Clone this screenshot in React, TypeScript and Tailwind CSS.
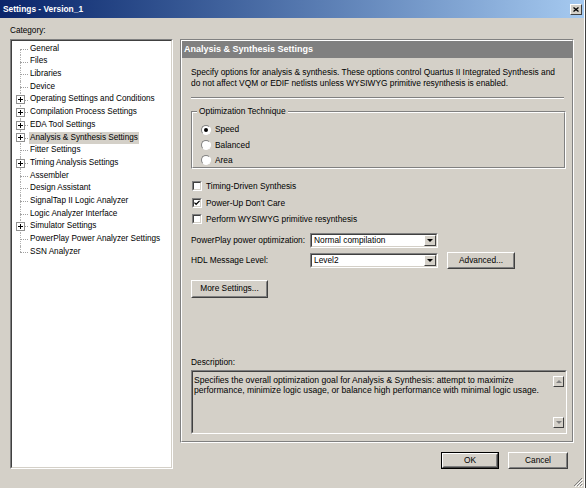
import React from 'react';

const tree: { label: string; plus?: boolean }[] = [
  { label: 'General' },
  { label: 'Files' },
  { label: 'Libraries' },
  { label: 'Device' },
  { label: 'Operating Settings and Conditions', plus: true },
  { label: 'Compilation Process Settings', plus: true },
  { label: 'EDA Tool Settings', plus: true },
  { label: 'Analysis & Synthesis Settings', plus: true },
  { label: 'Fitter Settings' },
  { label: 'Timing Analysis Settings', plus: true },
  { label: 'Assembler' },
  { label: 'Design Assistant' },
  { label: 'SignalTap II Logic Analyzer' },
  { label: 'Logic Analyzer Interface' },
  { label: 'Simulator Settings', plus: true },
  { label: 'PowerPlay Power Analyzer Settings' },
  { label: 'SSN Analyzer' },
];

const SELECTED = 'Analysis & Synthesis Settings';

function Button({ label, width, isDefault }: { label: string; width: string; isDefault?: boolean }) {
  return (
    <div className={`${width} h-full ${isDefault ? 'border border-black' : ''}`}>
      <div className="h-full border border-white border-r-[#404040] border-b-[#404040]">
        <div className="h-full flex items-center justify-center border border-transparent border-r-[#808080] border-b-[#808080]">
          {label}
        </div>
      </div>
    </div>
  );
}

function Combo({ value }: { value: string }) {
  return (
    <div className="w-[128px] h-[15px] border border-[#808080] border-r-white border-b-white">
      <div className="h-full flex bg-white border border-[#404040] border-r-[#d4d0c8] border-b-[#d4d0c8]">
        <div className="flex-1 flex items-center pl-[2px]">{value}</div>
        <div className="w-[12px] h-full bg-[#d4d0c8] border border-white border-r-[#404040] border-b-[#404040] flex items-center justify-center">
          <div className="w-0 h-0 border-l-[3px] border-r-[3px] border-t-[3px] border-l-transparent border-r-transparent border-t-black" />
        </div>
      </div>
    </div>
  );
}

function Checkbox({ label, checked }: { label: string; checked?: boolean }) {
  return (
    <div className="h-[16.5px] flex items-center">
      <div className="ml-[1px] w-[10px] h-[10px] border border-[#808080] border-r-white border-b-white">
        <div className="w-full h-full bg-white border border-[#404040] border-r-[#d4d0c8] border-b-[#d4d0c8] flex items-center justify-center">
          {checked && (
            <svg width="7" height="6" viewBox="0 0 7 6">
              <path d="M0.5 2.5 L2.5 4.5 L6.5 0.5" stroke="black" strokeWidth="1.4" fill="none" />
            </svg>
          )}
        </div>
      </div>
      <span className="ml-[4px]">{label}</span>
    </div>
  );
}

function Radio({ label, checked }: { label: string; checked?: boolean }) {
  return (
    <div className="h-[15.3px] flex items-center">
      <div className="w-[10px] h-[10px] rounded-full border border-[#808080] border-r-white border-b-white bg-white flex items-center justify-center">
        {checked && <div className="w-[4px] h-[4px] rounded-full bg-black" />}
      </div>
      <span className="ml-[4px]">{label}</span>
    </div>
  );
}

export default function App() {
  return (
    <div
      className="w-[586px] h-[488px] bg-[#d4d0c8] text-black text-[8.2px] leading-none overflow-hidden flex"
      style={{ fontFamily: '"Liberation Sans", Arial, sans-serif' }}
    >
      <div className="w-[584px] h-full flex flex-col relative">
        {/* title bar */}
        <div className="h-[18px] flex items-center justify-between pl-[3px] pr-[2px] bg-gradient-to-r from-[#0a246a] to-[#a6caf0]">
          <span className="text-white font-bold text-[8.4px]">Settings - Version_1</span>
          <div className="w-[12px] h-[11px] bg-[#d4d0c8] border border-white border-r-[#404040] border-b-[#404040] flex items-center justify-center">
            <svg width="6" height="5" viewBox="0 0 6 5">
              <path d="M0.5 0.5 L5.5 4.5 M5.5 0.5 L0.5 4.5" stroke="black" strokeWidth="1.3" />
            </svg>
          </div>
        </div>

        <div className="flex-1 flex pl-[10px]">
          {/* category column */}
          <div className="w-[163px] flex flex-col">
            <div className="h-[21px] pt-[9px]">Category:</div>
            <div className="h-[430px] border border-[#808080] border-r-white border-b-white">
              <div className="h-full bg-white border border-[#404040] border-r-[#d4d0c8] border-b-[#d4d0c8] pt-[1.5px] pl-[4px]">
                {tree.map((item, i) => (
                  <div key={item.label} className="h-[12.7px] flex items-center">
                    <div className="w-[12px] h-full relative">
                      <div
                        className={`absolute left-[4px] border-l border-dotted border-[#b0b0b0] ${
                          i === 0 ? 'top-1/2 bottom-0' : i === tree.length - 1 ? 'top-0 bottom-1/2' : 'top-0 bottom-0'
                        }`}
                      />
                      <div className="absolute left-[4px] right-0 top-1/2 border-t border-dotted border-[#a0a0a0]" />
                      {item.plus && (
                        <div className="absolute left-[0px] top-[2px] w-[9px] h-[9px] bg-white border border-[#909090] flex items-center justify-center">
                          <svg width="5" height="5" viewBox="0 0 5 5">
                            <path d="M0 2.5 H5 M2.5 0 V5" stroke="black" strokeWidth="1" />
                          </svg>
                        </div>
                      )}
                    </div>
                    <span
                      className={`ml-[1px] px-[1px] h-[12px] flex items-center ${
                        item.label === SELECTED ? 'bg-[#d4d0c8]' : ''
                      }`}
                    >
                      {item.label}
                    </span>
                  </div>
                ))}
              </div>
            </div>
          </div>

          {/* settings column */}
          <div className="ml-[7px] w-[394px] flex flex-col text-[8.35px]">
            <div className="mt-[21px] h-[404px] border border-[#808080] border-r-white border-b-white">
              <div className="h-full border border-white border-r-[#808080] border-b-[#808080] flex flex-col">
                <div className="h-[17px] bg-[#808080] text-white font-bold text-[9px] flex items-center pl-[2px]">
                  Analysis &amp; Synthesis Settings
                </div>
                <div className="pl-[9px] pr-[6px] flex flex-col">
                  <p className="mt-[9px] leading-[11px]">
                    Specify options for analysis &amp; synthesis. These options control Quartus II Integrated Synthesis and
                    <br />
                    do not affect VQM or EDIF netlists unless WYSIWYG primitive resynthesis is enabled.
                  </p>
                  <div className="mt-[8px] w-[373px] h-[2px] border-t border-[#808080] border-b border-b-white" />

                  {/* optimization group */}
                  <div className="mt-[12px] w-[375px] h-[58px] border border-[#808080] border-r-white border-b-white relative">
                    <div className="h-full border border-white border-r-[#808080] border-b-[#808080] pl-[8px] pt-[9px]">
                      <span className="absolute -top-[5px] left-[5px] px-[2px] bg-[#d4d0c8]">Optimization Technique</span>
                      <Radio label="Speed" checked />
                      <Radio label="Balanced" />
                      <Radio label="Area" />
                    </div>
                  </div>

                  <div className="mt-[9px]">
                    <Checkbox label="Timing-Driven Synthesis" />
                    <Checkbox label="Power-Up Don't Care" checked />
                    <Checkbox label="Perform WYSIWYG primitive resynthesis" />
                  </div>

                  <div className="mt-[5px] h-[15px] flex items-center">
                    <span className="w-[119px]">PowerPlay power optimization:</span>
                    <Combo value="Normal compilation" />
                  </div>
                  <div className="mt-[4px] h-[17px] flex items-center">
                    <span className="w-[119px]">HDL Message Level:</span>
                    <Combo value="Level2" />
                    <div className="ml-[9px] h-[17px]">
                      <Button label="Advanced..." width="w-[68px]" />
                    </div>
                  </div>
                  <div className="mt-[11px] h-[18px]">
                    <Button label="More Settings..." width="w-[77px]" />
                  </div>

                  <div className="mt-[59px] h-[12px] flex items-center">Description:</div>
                  <div className="mt-[1px] w-[376px] h-[64px] border border-[#808080] border-r-white border-b-white">
                    <div className="h-full flex border border-[#404040] border-r-[#d4d0c8] border-b-[#d4d0c8]">
                      <p className="flex-1 pl-[1px] pt-[3px] leading-[10.5px] text-[8.6px]">
                        Specifies the overall optimization goal for Analysis &amp; Synthesis: attempt to maximize
                        <br />
                        performance, minimize logic usage, or balance high performance with minimal logic usage.
                      </p>
                      <div className="w-[12px] flex flex-col justify-between py-[4px] pr-[1px]">
                        <div className="h-[11px] border border-white border-r-[#404040] border-b-[#404040] flex items-center justify-center">
                          <div className="w-0 h-0 border-l-[3px] border-r-[3px] border-b-[3px] border-l-transparent border-r-transparent border-b-[#808080]" />
                        </div>
                        <div className="h-[11px] border border-white border-r-[#404040] border-b-[#404040] flex items-center justify-center">
                          <div className="w-0 h-0 border-l-[3px] border-r-[3px] border-t-[3px] border-l-transparent border-r-transparent border-t-[#808080]" />
                        </div>
                      </div>
                    </div>
                  </div>
                </div>
              </div>
            </div>

            <div className="mt-[9px] h-[17px] flex justify-end pr-[6px] gap-[9px]">
              <Button label="OK" width="w-[58px]" isDefault />
              <Button label="Cancel" width="w-[60px]" />
            </div>
          </div>
        </div>

        {/* resize grip */}
        <svg className="absolute right-[1px] bottom-[1px]" width="11" height="11" viewBox="0 0 11 11">
          <path d="M10 2 L2 10 M10 5 L5 10 M10 8 L8 10" stroke="#808080" strokeWidth="1" />
          <path d="M11 3 L3 11 M11 6 L6 11 M11 9 L9 11" stroke="white" strokeWidth="1" />
        </svg>
      </div>
      {/* window frame */}
      <div className="w-[2px] h-full border-l border-white border-r border-r-[#404040]" />
    </div>
  );
}
